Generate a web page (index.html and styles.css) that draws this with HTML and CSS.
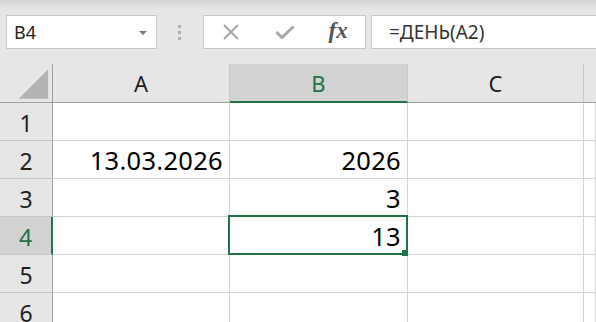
FILE: index.html
```html
<!DOCTYPE html>
<html lang="ru">
<head>
    <meta charset="UTF-8">
    <meta name="viewport" content="width=device-width, initial-scale=1.0">
    <title>Книга1 - Excel</title>
    <link rel="stylesheet" href="styles.css">
</head>
<body>
    <div class="toolbar">
        <div class="namebox">
            <span>B4</span>
            <span class="arrow"></span>
        </div>
        <div class="grip"><i></i><i></i><i></i></div>
        <div class="buttons">
            <span class="btn">
                <svg width="18" height="16" viewBox="0 0 18 16"><path d="M2 1 L16 15 M16 1 L2 15" stroke="#a8a8a8" stroke-width="2" fill="none"/></svg>
            </span>
            <span class="btn">
                <svg width="20" height="14" viewBox="0 0 20 14"><path d="M1.5 7 L7 12.5 L18.5 1.5" stroke="#a8a8a8" stroke-width="3" fill="none"/></svg>
            </span>
            <span class="btn fx">fx</span>
        </div>
        <div class="formula">=ДЕНЬ(A2)</div>
    </div>

    <div class="sheet">
        <div class="corner">
            <svg width="53" height="39" viewBox="0 0 53 39"><polygon points="19,35 49,35 49,5" fill="#b4b4b4"/></svg>
        </div>
        <div class="hd">A</div>
        <div class="hd on">B</div>
        <div class="hd">C</div>
        <div class="hd last"></div>

        <div class="rh">1</div>
        <div class="cell"></div>
        <div class="cell"></div>
        <div class="cell"></div>
        <div class="cell"></div>

        <div class="rh">2</div>
        <div class="cell">13.03.2026</div>
        <div class="cell">2026</div>
        <div class="cell"></div>
        <div class="cell"></div>

        <div class="rh">3</div>
        <div class="cell"></div>
        <div class="cell">3</div>
        <div class="cell"></div>
        <div class="cell"></div>

        <div class="rh on">4</div>
        <div class="cell"></div>
        <div class="cell sel">13</div>
        <div class="cell"></div>
        <div class="cell"></div>

        <div class="rh">5</div>
        <div class="cell"></div>
        <div class="cell"></div>
        <div class="cell"></div>
        <div class="cell"></div>

        <div class="rh">6</div>
        <div class="cell"></div>
        <div class="cell"></div>
        <div class="cell"></div>
        <div class="cell"></div>
    </div>
</body>
</html>
```

FILE: styles.css
```css
body {
    margin: 0;
    font-family: "Noto Sans", "DejaVu Sans", sans-serif;
    background: #ffffff;
    overflow: hidden;
}
.toolbar {
    display: flex;
    align-items: center;
    height: 64px;
    box-sizing: border-box;
    padding: 15px 0 15px 6px;
    background: linear-gradient(#d3d3d3, #e6e6e6 9px, #e6e6e6);
}
.namebox {
    display: flex;
    align-items: center;
    justify-content: space-between;
    width: 151px;
    height: 34px;
    box-sizing: border-box;
    padding: 0 9px 0 7px;
    background: white;
    border: 1px solid #c6c6c6;
    font-size: 18px;
    color: #222;
}
.arrow {
    width: 0;
    height: 0;
    border-left: 4px solid transparent;
    border-right: 4px solid transparent;
    border-top: 4px solid #7a7a7a;
    margin-top: 1px;
}
.grip {
    display: flex;
    flex-direction: column;
    gap: 3px;
    margin: 0 22px 0 21px;
}
.grip i {
    display: block;
    width: 3px;
    height: 3px;
    background: #b0b0b0;
}
.buttons {
    display: flex;
    width: 163px;
    height: 34px;
    box-sizing: border-box;
    background: white;
    border: 1px solid #c6c6c6;
}
.btn {
    display: flex;
    align-items: center;
    justify-content: center;
    width: 54px;
}
.fx {
    font-family: "Liberation Serif", serif;
    font-style: italic;
    font-weight: bold;
    font-size: 23px;
    color: #555;
    padding-bottom: 2px;
}
.formula {
    flex: 1;
    height: 34px;
    box-sizing: border-box;
    margin-left: 5px;
    margin-right: -2px;
    padding-left: 17px;
    display: flex;
    align-items: center;
    background: white;
    border: 1px solid #c6c6c6;
    font-size: 19px;
    color: #333;
}
.sheet {
    display: grid;
    grid-template-columns: 53px 177px 178px 176px 1fr;
    grid-template-rows: 39px repeat(6, 38px);
}
.sheet > div {
    box-sizing: border-box;
    display: flex;
    align-items: center;
}
.corner {
    background: #e6e6e6;
    border-right: 1px solid #9f9f9f;
    border-bottom: 1px solid #9f9f9f;
}
.hd {
    justify-content: center;
    background: #e6e6e6;
    border-right: 1px solid #c6c6c6;
    border-bottom: 1px solid #9f9f9f;
    font-size: 22px;
    color: #1e1e1e;
}
.hd.last {
    border-right: none;
}
.hd.on {
    background: #d2d2d2;
    color: #217346;
    border-bottom: 2px solid #217346;
}
.rh {
    justify-content: center;
    padding-top: 2px;
    background: #e6e6e6;
    border-right: 1px solid #9f9f9f;
    border-bottom: 1px solid #c6c6c6;
    font-size: 23px;
    color: #1e1e1e;
}
.rh.on {
    background: #d2d2d2;
    color: #217346;
    border-right: 2px solid #217346;
}
.cell {
    justify-content: flex-end;
    padding-right: 6px;
    border-right: 1px solid #d4d4d4;
    border-bottom: 1px solid #d4d4d4;
    font-size: 25.5px;
    letter-spacing: 0.3px;
    color: #000;
}
.cell.sel {
    position: relative;
}
.cell.sel::after {
    content: "";
    position: absolute;
    top: -2px;
    left: -2px;
    right: -1px;
    bottom: -1px;
    border: 2px solid #217346;
}
.cell.sel::before {
    content: "";
    position: absolute;
    right: -1px;
    bottom: -2px;
    width: 6px;
    height: 6px;
    background: #217346;
    z-index: 2;
}
```
